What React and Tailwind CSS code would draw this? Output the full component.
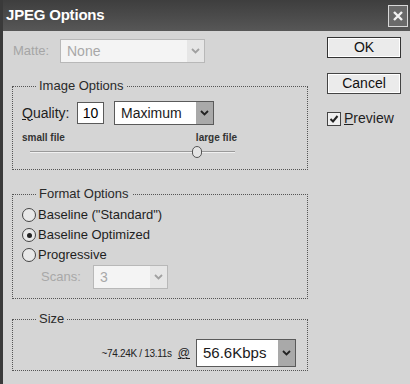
import React from 'react';

const FONT = { fontFamily: '"Liberation Sans", Arial, sans-serif' };

function Chevron({ className = '' }) {
  return (
    <svg width="9" height="6" viewBox="0 0 9 6" className={className}>
      <path d="M1 1 L4.5 4.5 L8 1" fill="none" stroke="currentColor" strokeWidth="1.8" />
    </svg>
  );
}

function Select({ value, width, height = 24, disabled = false, dark = false, textSize = 'text-[14px]' }) {
  return (
    <div
      className={`flex items-stretch border ${disabled ? 'border-[#b8b8b8] bg-[#f4f4f4]' : 'border-[#5a5a5a] bg-white'}`}
      style={{ width, height }}
    >
      <div className={`flex-1 flex items-center pl-1.5 ${textSize} ${disabled ? 'text-[#a8a8a8]' : 'text-[#1a1a1a]'}`}>
        {value}
      </div>
      <div
        className={`w-[17px] flex items-center justify-center ${dark ? 'bg-[#a9a9a9] text-[#222]' : disabled ? 'bg-[#e6e6e6] text-[#a0a0a0]' : 'bg-[#c4c4c4] text-[#333]'}`}
      >
        <Chevron />
      </div>
    </div>
  );
}

function Radio({ label, checked }) {
  return (
    <div className="flex items-center h-[20px] gap-[2px]">
      <div className="w-[14px] h-[14px] rounded-full border border-[#444] bg-[#e8e8e8] flex items-center justify-center">
        {checked && <div className="w-[5px] h-[5px] rounded-full bg-[#222]" />}
      </div>
      <span className="text-[13px] text-[#1e1e1e]">{label}</span>
    </div>
  );
}

function Group({ title, className = '', children }) {
  return (
    <fieldset className={`border border-dotted border-[#555] px-[9px] m-0 ${className}`}>
      <legend className="px-[3px] ml-[14px] text-[13px] text-[#2a2a2a] leading-[16px]">{title}</legend>
      {children}
    </fieldset>
  );
}

export default function App() {
  return (
    <div className="w-[410px] h-[384px] bg-[#d5d5d5] flex flex-col overflow-hidden border-l-[3px] border-l-[#3a3a3a]" style={FONT}>
      {/* Title bar */}
      <div className="h-[31px] shrink-0 bg-gradient-to-b from-[#3e3e3e] to-[#575757] flex items-center justify-between pl-[3px] pr-[2px]">
        <span className="text-white font-bold text-[15px] tracking-[-0.2px]">JPEG Options</span>
        <div className="w-[20px] h-[22px] border border-[#d8d8d8] bg-[#6a6a6a] flex items-center justify-center">
          <svg width="12" height="12" viewBox="0 0 12 12">
            <path d="M2 2 L10 10 M10 2 L2 10" stroke="#f2f2f2" strokeWidth="2.4" />
          </svg>
        </div>
      </div>

      <div className="flex flex-1">
        {/* Left column */}
        <div className="w-[305px] pl-[9px] pt-[8px] flex flex-col">
          <div className="flex items-center h-[24px]">
            <span className="w-[48px] pl-[1px] text-[13px] text-[#a5a5a5]">Matte:</span>
            <Select value="None" width={145} disabled />
          </div>

          <Group title="Image Options" className="mt-[15px] h-[92px] pt-[7px]">
            <div className="flex items-center h-[24px]">
              <span className="text-[14px] text-[#1e1e1e] w-[55px]"><span className="underline">Q</span>uality:</span>
              <div className="w-[27px] h-[22px] border border-[#5a5a5a] bg-white flex items-center justify-center text-[14px]">10</div>
              <div className="ml-[10px]">
                <Select value="Maximum" width={100} dark />
              </div>
            </div>
            <div className="flex justify-between w-[215px] mt-[7px] text-[10px] font-bold text-[#333] leading-[12px]">
              <span>small file</span>
              <span>large file</span>
            </div>
            <div className="relative w-[205px] ml-[8px] h-[14px] mt-[1px] flex items-center">
              <div className="w-full h-[2px] bg-[#9a9a9a] border-b border-b-[#f0f0f0]" />
              <div className="absolute left-[162px] top-[1px] w-[10px] h-[12px] rounded-full border border-[#555] bg-[#e4e4e4]" />
            </div>
          </Group>

          <Group title="Format Options" className="mt-[16px] h-[113px] pt-[3px]">
            <Radio label={'Baseline ("Standard")'} />
            <Radio label="Baseline Optimized" checked />
            <Radio label="Progressive" />
            <div className="flex items-center ml-[19px]">
              <span className="w-[52px] text-[13px] text-[#a8a8a8]">Scans:</span>
              <Select value="3" width={75} disabled />
            </div>
          </Group>

          <Group title="Size" className="mt-[12px] h-[60px] pt-[12px]">
            <div className="flex items-center justify-end pr-[2px] gap-[6px]">
              <span className="text-[10px] text-[#222] tracking-[-0.3px]">~74.24K / 13.11s</span>
              <span className="text-[12px] underline text-[#222]">@</span>
              <Select value="56.6Kbps" width={100} height={28} dark textSize="text-[15px]" />
            </div>
          </Group>
        </div>

        {/* Right column */}
        <div className="pl-[19px] pt-[6px] flex flex-col">
          <button className="w-[74px] h-[21px] border border-[#333] bg-[#ebebeb] text-[14px] text-[#111] shadow-[inset_0_0_0_1px_#fff] flex items-center justify-center">OK</button>
          <button className="w-[74px] h-[21px] mt-[15px] border border-[#444] bg-[#ebebeb] text-[14px] text-[#111] shadow-[inset_0_0_0_1px_#fff] flex items-center justify-center">Cancel</button>
          <div className="flex items-center mt-[14px] gap-[3px]">
            <div className="w-[14px] h-[14px] border border-[#444] bg-[#efefef] flex items-center justify-center">
              <svg width="10" height="10" viewBox="0 0 10 10">
                <path d="M1.5 5 L4 7.5 L8.5 2" fill="none" stroke="#222" strokeWidth="2" />
              </svg>
            </div>
            <span className="text-[14px] text-[#1e1e1e]"><span className="underline">P</span>review</span>
          </div>
        </div>
      </div>
    </div>
  );
}
